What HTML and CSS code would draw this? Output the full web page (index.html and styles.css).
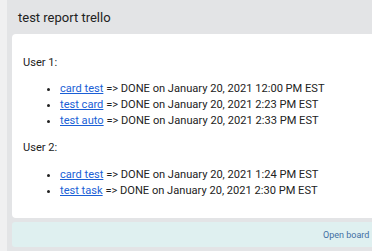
FILE: index.html
```html
<!DOCTYPE html>
<html lang="en">
  <head>
    <meta charset="UTF-8" />
    <title>test report trello</title>
    <link rel="stylesheet" href="styles.css">
  </head>
  <body>
    <div class="panel">
      <div class="panel-header">test report trello</div>

      <div class="report">
        <p class="user">User 1:</p>
        <ul class="tasks">
          <li><a href="#">card test</a> =&gt; DONE on January 20, 2021 12:00 PM EST</li>
          <li><a href="#">test card</a> =&gt; DONE on January 20, 2021 2:23 PM EST</li>
          <li><a href="#">test auto</a> =&gt; DONE on January 20, 2021 2:33 PM EST</li>
        </ul>

        <p class="user">User 2:</p>
        <ul class="tasks">
          <li><a href="#">card test</a> =&gt; DONE on January 20, 2021 1:24 PM EST</li>
          <li><a href="#">test task</a> =&gt; DONE on January 20, 2021 2:30 PM EST</li>
        </ul>
      </div>

      <div class="panel-footer">
        <a href="#" class="open-board">Open board</a>
        <svg class="open-icon" width="10" height="10" viewBox="0 0 10 10">
          <path d="M4 1H1v8h8V6M6 1h3v3M9 1L4.5 5.5" fill="none" stroke="#3f6fa3" stroke-width="1.2"/>
        </svg>
      </div>
    </div>
  </body>
</html>
```

FILE: styles.css
```css
:root {
  --page-bg: #f0f0f1;
  --panel-bg: #e3e4e6;
  --card-bg: #ffffff;
  --footer-bg: #dff0f0;
  --text-color: #222;
  --link-color: #1a5fd6;
  --footer-link: #3f6fa3;
}

* {
  box-sizing: border-box;
}

body {
  margin: 0;
  background-color: var(--page-bg);
  font-family: Roboto, "Liberation Sans", sans-serif;
  color: var(--text-color);
  overflow: hidden;
}

.panel {
  margin-left: 7px;
  width: 420px;
  background-color: var(--panel-bg);
  padding: 0 0 4px 5px;
}

.panel-header {
  padding: 8px 0 6px 6px;
  font-size: 13px;
  line-height: 20px;
}

.report {
  background-color: var(--card-bg);
  border-radius: 4px;
  padding: 21px 11px 19px;
  font-size: 11.1px;
  line-height: 16px;
}

.user {
  margin: 0 0 10px;
}

.tasks {
  margin: 0 0 11px;
  padding-left: 37px;
}

.tasks:last-child {
  margin-bottom: 0;
}

.tasks a {
  color: var(--link-color);
}

.tasks + .user {
  margin-bottom: 11px;
}

.panel-footer {
  margin-top: 4px;
  background-color: var(--footer-bg);
  border-radius: 3px;
  height: 25px;
  padding: 0 0 0 311px;
  display: flex;
  align-items: center;
  gap: 3px;
  font-size: 9px;
  white-space: nowrap;
}

.open-board {
  color: var(--footer-link);
  text-decoration: none;
}
```
